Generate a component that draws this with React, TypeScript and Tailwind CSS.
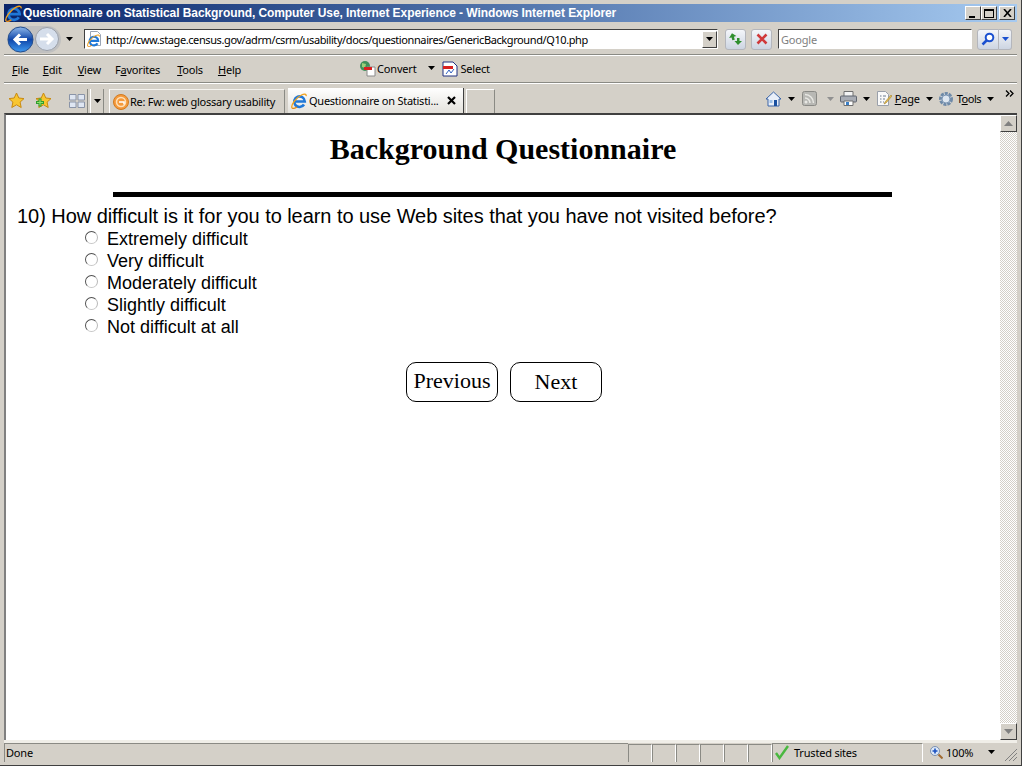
import type { ReactNode } from "react";

const ui = "font-['Noto_Sans','Liberation_Sans',sans-serif]";

const Arrow = ({ className = "", color = "#000" }: { className?: string; color?: string }) => (
  <svg width="7" height="4" viewBox="0 0 7 4" className={"shrink-0 " + className}>
    <path d="M0 0h7L3.5 4z" fill={color} />
  </svg>
);

const IeLogo = ({ size = 16 }: { size?: number }) => (
  <svg width={size} height={size} viewBox="0 0 16 16" className="shrink-0">
    <path
      d="M13 11.500a5.300 5.300 0 11.800-3H3.500"
      fill="none"
      stroke="#1f78d8"
      strokeWidth="2.600"
    />
    <path d="M1 15C-.5 12.500 5 4.500 10.500 2c3-1.400 5-1 4.700 1.200" fill="none" stroke="#f2a21e" strokeWidth="1.300" />
    <path d="M1 15c1.200 1 3.200.2 5-1" fill="none" stroke="#e58a10" strokeWidth="1.200" />
  </svg>
);

const PageIe = () => (
  <div className="relative h-4 w-4 shrink-0">
    <svg width="16" height="16" viewBox="0 0 16 16">
      <path d="M3.5.5h7l3 3v11h-10z" fill="#fff" stroke="#9aa5b5" />
    </svg>
    <div className="absolute bottom-0 left-0">
      <IeLogo size={13} />
    </div>
  </div>
);

const Star = ({ plus = false }: { plus?: boolean }) => (
  <svg width="17" height="17" viewBox="0 0 17 17" className="shrink-0">
    <path
      d="M8.5 1l2.3 5 5.2.6-3.9 3.5 1.100 5.400-4.700-2.700-4.700 2.700 1.100-5.400L1 6.600 6.200 6z"
      fill="#f8c630"
      stroke="#c98a10"
    />
    {plus && <path d="M5 6.500v8M1 10.500h8" stroke="#2f9e2f" strokeWidth="3" />}
    {plus && <path d="M5 7.500v6M2 10.500h6" stroke="#8fe06a" strokeWidth="1.200" />}
  </svg>
);

const ToolBtn = ({ children, className = "" }: { children: ReactNode; className?: string }) => (
  <div
    className={
      "flex h-[21px] items-center justify-center rounded-[3px] border border-[#b4b6bc] bg-gradient-to-b from-[#f4f6fa] to-[#cdd5e2] " +
      className
    }
  >
    {children}
  </div>
);

const Menu = ({ u, rest, pre = "", className = "" }: { u: string; rest: string; pre?: string; className?: string }) => (
  <span className={"text-[11px] leading-none text-black " + className}>
    {pre}
    <span className="underline">{u}</span>
    {rest}
  </span>
);

const WinBtn = ({ children, className = "" }: { children: ReactNode; className?: string }) => (
  <div
    className={
      "flex h-[14px] w-4 items-center justify-center border border-t-white border-l-white border-r-[#404040] border-b-[#404040] bg-[#d4d0c8] " +
      className
    }
  >
    {children}
  </div>
);

const Option = ({ label }: { label: string }) => (
  <div className="flex h-[22px] items-center">
    <div className="mb-[3px] h-[13px] w-[13px] rounded-full border border-t-[#505050] border-l-[#505050] border-r-[#b8b8b8] border-b-[#c8c8c8] bg-white" />
    <span className="ml-[9px] text-[18px] leading-[22px] text-black">{label}</span>
  </div>
);

const PageButton = ({ label, className = "" }: { label: string; className?: string }) => (
  <button
    className={
      "flex h-10 w-[92px] items-center justify-center rounded-[10px] border border-black bg-white font-['Liberation_Serif',serif] text-[22px] leading-none text-black " +
      className
    }
  >
    {label}
  </button>
);

const ScrollBtn = ({ up = false }: { up?: boolean }) => (
  <div className="flex h-[17px] w-[17px] items-center justify-center border border-t-white border-l-white border-r-[#404040] border-b-[#404040] bg-[#d4d0c8]">
    <svg width="9" height="5" viewBox="0 0 9 5">
      <path d={up ? "M0 5h9L4.5 0z" : "M0 0h9L4.5 5z"} fill="#808080" />
    </svg>
  </div>
);

const StatusCell = () => (
  <div className="h-[18px] w-6 shrink-0 border-l border-t border-r border-l-[#8a8a84] border-t-[#8a8a84] border-r-white" />
);

export default function App() {
  return (
    <div className={"flex h-[766px] w-[1022px] flex-col overflow-hidden border-r border-b border-r-[#404040] border-b-[#404040] bg-[#d4d0c8] px-1 pt-1 tracking-[-0.2px] " + ui}>
      {/* title bar */}
      <div className="flex h-[18px] shrink-0 items-center bg-gradient-to-r from-[#0a246a] to-[#a6caf0] pl-[1px] pr-[2px]">
        <IeLogo size={17} />
        <span className="ml-[1px] font-['Liberation_Sans',sans-serif] text-[12px] leading-none font-bold tracking-[-0.08px] whitespace-nowrap text-white">
          Questionnaire on Statistical Background, Computer Use, Internet Experience - Windows Internet Explorer
        </span>
        <div className="ml-auto flex">
          <WinBtn>
            <div className="mt-[8px] mr-[2px] h-[2px] w-[6px] bg-black" />
          </WinBtn>
          <WinBtn>
            <div className="h-[9px] w-[10px] border border-t-2 border-black" />
          </WinBtn>
          <WinBtn className="ml-[2px]">
            <svg width="9" height="8" viewBox="0 0 9 8">
              <path d="M1 0l7 8M8 0L1 8" stroke="#000" strokeWidth="1.600" />
            </svg>
          </WinBtn>
        </div>
      </div>

      {/* address row */}
      <div className="flex h-[33px] shrink-0 items-center border-b border-b-[#8a8a84] pt-[2px]">
        <div className="ml-[3px] flex h-[27px] w-[54px] shrink-0 items-center rounded-full bg-[#c0c0c0]">
          <svg width="27" height="27" viewBox="0 0 27 27" className="shrink-0">
            <defs>
              <linearGradient id="back" x1="0" y1="0" x2="0" y2="1">
                <stop offset="0" stopColor="#8fb8ea" />
                <stop offset="0.5" stopColor="#0f45a8" />
                <stop offset="1" stopColor="#3f9af0" />
              </linearGradient>
            </defs>
            <circle cx="13.500" cy="13.500" r="12.500" fill="url(#back)" stroke="#234d8d" />
            <path d="M20 13.500H9M13 8.500l-5 5 5 5" fill="none" stroke="#fff" strokeWidth="3" />
          </svg>
          <svg width="26" height="26" viewBox="0 0 26 26" className="shrink-0">
            <circle cx="13" cy="13" r="11.500" fill="#d5deeb" stroke="#9a9fa8" />
            <path d="M6 13h11M13 8l5 5-5 5" fill="none" stroke="#fff" strokeWidth="3" />
          </svg>
        </div>
        <Arrow className="ml-[5px]" />
        <div className="ml-[11px] flex h-[20px] w-[634px] shrink-0 items-center border border-t-[#404040] border-l-[#404040] border-r-white border-b-white bg-white pl-[2px]">
          <PageIe />
          <span className="ml-[3px] text-[11px] leading-none tracking-[-0.4px] whitespace-nowrap text-black">
            http://cww.stage.census.gov/adrm/csrm/usability/docs/questionnaires/GenericBackground/Q10.php
          </span>
          <div className="ml-auto flex h-[17px] w-[15px] shrink-0 items-center justify-center border border-t-white border-l-white border-r-[#404040] border-b-[#404040] bg-[#d4d0c8]">
            <Arrow />
          </div>
        </div>
        <ToolBtn className="ml-[7px] w-[21px]">
          <svg width="15" height="14" viewBox="0 0 15 14">
            <path d="M5 1L1 5h2.500v3H6V5h2.500z" transform="rotate(-15 5 5)" fill="#2f8f2f" />
            <path d="M10 13l4-4h-2.500V6H9v3H6.500z" fill="#2f8f2f" />
          </svg>
        </ToolBtn>
        <ToolBtn className="ml-[5px] w-[21px]">
          <svg width="12" height="12" viewBox="0 0 12 12">
            <path d="M1.500 1.500l9 9M10.500 1.500l-9 9" stroke="#d0393b" strokeWidth="2.600" />
          </svg>
        </ToolBtn>
        <div className="ml-[6px] flex h-[20px] w-[194px] shrink-0 items-center border border-t-[#404040] border-l-[#404040] border-r-white border-b-white bg-white pl-[2px] text-[11px] leading-none text-[#808080]">
          Google
        </div>
        <ToolBtn className="ml-[5px] w-[22px] rounded-r-none">
          <svg width="14" height="14" viewBox="0 0 14 14">
            <circle cx="8.500" cy="5.500" r="3.800" fill="#fff" stroke="#1a50d0" strokeWidth="2" />
            <path d="M5.500 8.500L1.500 12.500" stroke="#1a50d0" strokeWidth="2.500" />
          </svg>
        </ToolBtn>
        <ToolBtn className="w-[13px] rounded-l-none border-l-0">
          <Arrow color="#1a50d0" />
        </ToolBtn>
      </div>

      {/* menu row */}
      <div className="flex h-[28px] shrink-0 items-center border-t border-b border-t-white border-b-[#8a8a84]">
        <Menu u="F" rest="ile" className="ml-2" />
        <Menu u="E" rest="dit" className="ml-[14px]" />
        <Menu u="V" rest="iew" className="ml-4" />
        <Menu pre="F" u="a" rest="vorites" className="ml-[14px]" />
        <Menu u="T" rest="ools" className="ml-[17px]" />
        <Menu u="H" rest="elp" className="ml-[15px]" />
        <div className="mb-[2px] ml-[118px] flex items-center">
          <svg width="17" height="17" viewBox="0 0 17 17" className="shrink-0">
            <circle cx="6" cy="6" r="5" fill="#3f8f5a" />
            <path d="M3 3l4 1-1 4-3-1z" fill="#9ad07a" />
            <path d="M8 7h8v9H8z" fill="#fff" stroke="#8a8a8a" />
            <path d="M5 7h8v3H5z" fill="#d82020" />
          </svg>
          <span className="ml-[1px] text-[11px] leading-none text-black">Convert</span>
          <Arrow className="ml-3" />
          <svg width="16" height="17" viewBox="0 0 16 17" className="ml-[7px] shrink-0">
            <path d="M1 2h10l4 4v10H1z" fill="#fff" stroke="#203080" />
            <path d="M1 6h10v3H1z" fill="#d82020" />
            <path d="M4 14l3-4 2 3 3-4" fill="none" stroke="#3060c0" />
          </svg>
          <span className="ml-[2px] text-[11px] leading-none text-black">Select</span>
        </div>
      </div>

      {/* tab row */}
      <div className="flex h-[30px] shrink-0 items-end border-t border-t-white">
        <div className="mb-[4px] ml-[4px] flex items-center">
          <Star />
          <div className="ml-[10px]">
            <Star plus />
          </div>
        </div>
        <div className="ml-[14px] flex h-[24px] w-[22px] items-center justify-center border-r border-r-[#8a8a84]">
          <svg width="16" height="14" viewBox="0 0 16 14">
            <path d="M.5.5h6.500v5.500H.5zM9 .5h6.500v5.500H9zM.5 8h6.500v5.500H.5zM9 8h6.500v5.500H9z" fill="#dfe6f2" stroke="#8a94a8" />
          </svg>
        </div>
        <div className="ml-[2px] flex h-[24px] w-[14px] items-center justify-center border-l border-r border-l-white border-r-[#8a8a84]">
          <Arrow />
        </div>
        <div className="ml-[5px] flex h-[24px] w-[176px] items-center border-t border-r border-l border-t-[#f4f2ee] border-r-[#8a8a84] border-l-white pl-[3px]">
          <svg width="16" height="16" viewBox="0 0 16 16" className="shrink-0">
            <circle cx="8" cy="8" r="7.500" fill="#f59a3c" stroke="#d07a20" />
            <circle cx="8" cy="8" r="4.500" fill="none" stroke="#fde0b8" strokeWidth="1.500" />
            <path d="M6 8h5v2.500" fill="none" stroke="#fff" strokeWidth="1.500" />
          </svg>
          <span className="ml-[1px] text-[11px] leading-none tracking-[-0.25px] whitespace-nowrap text-black">Re: Fw: web glossary usability</span>
        </div>
        <div className="ml-[3px] flex h-[25px] w-[176px] items-center border-r border-r-[#404040] bg-gradient-to-b from-white to-[#e4e2dc] pl-[3px]">
          <IeLogo size={16} />
          <span className="ml-[2px] text-[11px] leading-none tracking-[-0.25px] whitespace-nowrap text-black">Questionnaire on Statisti...</span>
          <svg width="9" height="9" viewBox="0 0 9 9" className="mr-[7px] ml-auto shrink-0">
            <path d="M1 1l7 7M8 1L1 8" stroke="#000" strokeWidth="2.200" />
          </svg>
        </div>
        <div className="ml-[2px] h-[24px] w-[29px] border-t border-r border-l border-t-white border-r-[#8a8a84] border-l-white" />
        <div className="ml-auto flex h-[24px] items-center pb-[5px]">
          <svg width="17" height="16" viewBox="0 0 17 16" className="shrink-0">
            <path d="M8.500 1L1 8h2v7h11V8h2z" fill="#e8eef8" stroke="#3a64a8" />
            <path d="M9 9h3v6H9z" fill="#1a50a0" />
            <path d="M4.500 9h3v3h-3z" fill="#9cc0e8" />
          </svg>
          <Arrow className="ml-[6px]" />
          <svg width="16" height="15" viewBox="0 0 16 15" className="ml-[7px] shrink-0">
            <rect x=".5" y=".5" width="14" height="14" rx="2" fill="#b8b8b4" stroke="#8a8a86" />
            <circle cx="4" cy="11" r="1.500" fill="#e8e8e4" />
            <path d="M3 7a5 5 0 015 5M3 3.500a8.500 8.500 0 018.500 8.500" fill="none" stroke="#e8e8e4" strokeWidth="1.500" />
          </svg>
          <Arrow className="ml-[9px]" color="#909090" />
          <svg width="17" height="15" viewBox="0 0 17 15" className="ml-[6px] shrink-0">
            <path d="M4 .5h9v5H4z" fill="#f4f4f4" stroke="#707070" />
            <rect x=".5" y="5" width="16" height="6" rx="1" fill="#a8acb4" stroke="#606670" />
            <path d="M4 10h9v4.500H4z" fill="#fff" stroke="#707070" />
            <path d="M6 11h3v3H6z" fill="#3a80c8" />
          </svg>
          <Arrow className="ml-[6px]" />
          <svg width="16" height="17" viewBox="0 0 16 17" className="ml-[6px] shrink-0">
            <path d="M1.500 1.500h8l3 3v11h-11z" fill="#fafafa" stroke="#9aa0aa" />
            <path d="M4 6h1.500M7 6h3M4 9h1.500M7 9h2M4 12h1.500M7 12h1" stroke="#6a7a90" />
            <path d="M15 5l-6 7-1 2 2-1 6-7z" fill="#e8c050" stroke="#a08030" strokeWidth=".6" />
          </svg>
          <span className="ml-[3px] text-[11px] leading-none text-black">
            <span className="underline">P</span>age
          </span>
          <Arrow className="ml-[6px]" />
          <svg width="16" height="16" viewBox="0 0 16 16" className="ml-[5px] shrink-0">
            <circle cx="8" cy="8" r="5.500" fill="#c8d4e4" stroke="#6f8aa8" strokeWidth="3" strokeDasharray="3 1" />
            <circle cx="8" cy="8" r="4" fill="#dde6f0" stroke="#7f98b4" />
          </svg>
          <span className="ml-[3px] text-[11px] leading-none tracking-[-0.5px] text-black">
            T<span className="underline">o</span>ols
          </span>
          <Arrow className="ml-[6px]" />
          <svg width="9" height="7" viewBox="0 0 9 7" className="mr-[3px] mb-[11px] ml-[11px] shrink-0">
            <path d="M1 .5l3 3-3 3M5 .5l3 3-3 3" fill="none" stroke="#000" strokeWidth="1.300" />
          </svg>
        </div>
      </div>

      {/* page */}
      <div className="flex min-h-0 flex-1 border-t-2 border-l-2 border-t-[#404040] border-l-[#808080] bg-white">
        <div className="min-w-0 flex-1 font-['Liberation_Sans',sans-serif] tracking-normal">
          <h1 className="mt-[15px] text-center font-['Liberation_Serif',serif] text-[30px] leading-[37px] font-bold text-black">
            Background Questionnaire
          </h1>
          <div className="mt-[25px] ml-[107px] h-[5px] w-[779px] bg-black" />
          <p className="mt-[8px] ml-[11px] text-[20px] leading-[23px] tracking-[-0.05px] text-black">
            10) How difficult is it for you to learn to use Web sites that you have not visited before?
          </p>
          <div className="ml-[79px]">
            <Option label="Extremely difficult" />
            <Option label="Very difficult" />
            <Option label="Moderately difficult" />
            <Option label="Slightly difficult" />
            <Option label="Not difficult at all" />
          </div>
          <div className="mt-[24px] flex justify-center gap-3 pl-[2px]">
            <PageButton label="Previous" className="pb-[3px]" />
            <PageButton label="Next" className="pb-[1px]" />
          </div>
        </div>
        <div className="flex w-[17px] shrink-0 flex-col justify-between bg-[repeating-conic-gradient(#d4d0c8_0_25%,#ffffff_0_50%)] bg-[length:2px_2px]">
          <ScrollBtn up />
          <ScrollBtn />
        </div>
      </div>

      {/* status bar */}
      <div className="flex h-[25px] shrink-0 items-end border-t-[3px] border-t-[#f0eee8] pb-[3px]">
        <div className="flex h-[19px] flex-1 items-center border-t border-l border-t-[#8a8a84] border-l-[#8a8a84] pb-[2px] pl-[1px] text-[11px] leading-none text-black">
          Done
        </div>
        <div className="flex items-end">
          <StatusCell />
          <StatusCell />
          <StatusCell />
          <StatusCell />
          <StatusCell />
          <StatusCell />
        </div>
        <div className="flex h-[19px] w-[151px] items-center border-t border-r border-l border-t-[#8a8a84] border-r-white border-l-[#8a8a84] pb-[1px] pl-[1px]">
          <svg width="16" height="15" viewBox="0 0 16 15" className="shrink-0">
            <path d="M2 8l3.500 5L14 1" fill="none" stroke="#49b83f" strokeWidth="2.400" />
          </svg>
          <span className="ml-[4px] text-[11px] leading-none text-black">Trusted sites</span>
        </div>
        <div className="flex h-[19px] w-[94px] items-center pb-[1px] pl-[7px]">
          <svg width="13" height="13" viewBox="0 0 13 13" className="shrink-0">
            <circle cx="5" cy="5" r="4.500" fill="#dce8f8" stroke="#7a90b0" />
            <path d="M5 2.500v5M2.500 5h5" stroke="#1a50c0" strokeWidth="1.600" />
            <path d="M8.500 8.500l4 4" stroke="#a06a30" strokeWidth="2" />
          </svg>
          <span className="ml-[3px] text-[11px] leading-none text-black">100%</span>
          <Arrow className="ml-[15px]" />
          <svg width="13" height="13" viewBox="0 0 13 13" className="mt-[5px] ml-auto shrink-0">
            <path d="M13 1L1 13M13 5l-8 8M13 9l-4 4" stroke="#808080" />
          </svg>
        </div>
      </div>
    </div>
  );
}
